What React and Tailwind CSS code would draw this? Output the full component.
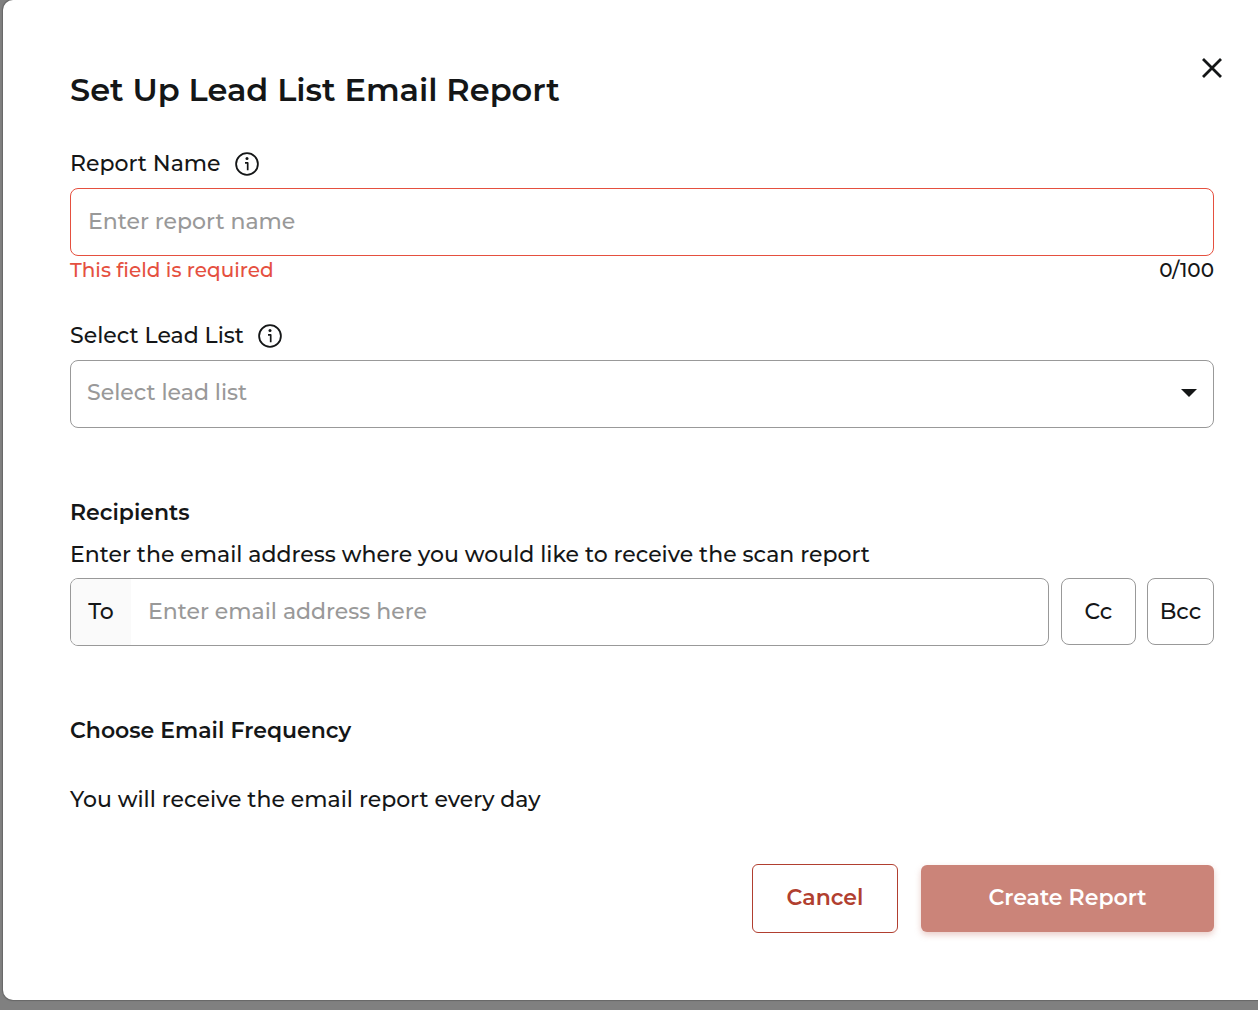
import { useState } from "react";

function InfoIcon() {
  return (
    <svg viewBox="0 0 24 24" className="size-6" fill="none" stroke="currentColor" aria-hidden="true">
      <circle cx="12" cy="12" r="10.9" strokeWidth="1.8" />
      <circle cx="12" cy="6.6" r="1.5" fill="currentColor" stroke="none" />
      <path d="M10 10.9h2.7v7.4" strokeWidth="1.7" strokeLinejoin="round" />
    </svg>
  );
}

function FieldLabel({ htmlFor, info, children }) {
  return (
    <div className="mb-2 flex items-center gap-3.5 leading-8">
      <label htmlFor={htmlFor}>{children}</label>
      <button type="button" aria-label={info}>
        <InfoIcon />
      </button>
    </div>
  );
}

export default function App() {
  const [name, setName] = useState("");
  const [list, setList] = useState("");

  return (
    <div className="min-h-screen bg-[#808080] pb-[10px] pl-[3px] font-[Montserrat,Inter,sans-serif] text-[22px] font-medium text-[#141617]">
      <main
        role="dialog"
        aria-labelledby="dialog-title"
        className="relative rounded-l-[10px] bg-white pt-[70px] pr-11 pb-[67px] pl-[67px] shadow-[0_0_1px_1px_#666666]"
      >
        <button type="button" aria-label="Close" className="absolute top-[58px] right-9 size-5">
          <svg viewBox="0 0 20 20" className="size-5" fill="none" stroke="currentColor" strokeWidth="2.8">
            <path d="M1 1l18 18M19 1L1 19" />
          </svg>
        </button>

        <h1 id="dialog-title" className="mb-[38px] text-[32px] leading-10 font-semibold">
          Set Up Lead List Email Report
        </h1>

        <form onSubmit={(e) => e.preventDefault()}>
          <FieldLabel htmlFor="report-name" info="About report name">Report Name</FieldLabel>
          <input
            id="report-name"
            type="text"
            maxLength={100}
            value={name}
            onChange={(e) => setName(e.target.value)}
            placeholder="Enter report name"
            aria-describedby="report-error"
            className="block h-[68px] w-full rounded-lg border border-[#e5503f] px-[17px] pb-0.5 outline-none placeholder:text-[#999999]"
          />
          <div className="flex justify-between text-[20px] leading-7">
            <span id="report-error" className="text-[#e5503f]">This field is required</span>
            <span>{`${name.length}/100`}</span>
          </div>

          <div className="mt-9">
            <FieldLabel htmlFor="lead-list" info="About lead lists">Select Lead List</FieldLabel>
            <div className="relative">
              <select
                id="lead-list"
                value={list}
                onChange={(e) => setList(e.target.value)}
                className="block h-[68px] w-full appearance-none rounded-lg border border-[#999999] bg-white pr-12 pb-1 pl-4 text-[#999999] outline-none"
              >
                <option value="">Select lead list</option>
              </select>
              <svg viewBox="0 0 16 8" className="pointer-events-none absolute top-[29px] right-[17px] h-2 w-4" aria-hidden="true">
                <path d="M0 0h16L8 8z" fill="currentColor" />
              </svg>
            </div>
          </div>

          <h2 className="mt-[69px] leading-8 font-semibold">Recipients</h2>
          <p className="mt-[10px] mb-[7px] leading-8">
            Enter the email address where you would like to receive the scan report
          </p>
          <div className="flex items-start">
            <div className="flex h-[68px] min-w-0 flex-1 overflow-hidden rounded-lg border border-[#999999]">
              <label htmlFor="to" className="flex w-[60px] items-center justify-center bg-[#fafafa] pb-0.5">To</label>
              <input
                id="to"
                type="email"
                placeholder="Enter email address here"
                className="min-w-0 flex-1 px-[17px] pb-0.5 outline-none placeholder:text-[#999999]"
              />
            </div>
            <button type="button" className="ml-3 h-[67px] w-[75px] rounded-lg border border-[#999999]">Cc</button>
            <button type="button" className="ml-[11px] h-[67px] w-[67px] rounded-lg border border-[#999999]">Bcc</button>
          </div>

          <h2 className="mt-[69px] leading-8 font-semibold">Choose Email Frequency</h2>
          <p className="mt-[37px] leading-8">You will receive the email report every day</p>

          <div className="mt-12 flex items-center justify-end gap-[23px] font-semibold">
            <button type="button" className="h-[69px] w-[146px] rounded-md border border-[#b13f30] pb-0.5 text-[#b13f30]">
              Cancel
            </button>
            <button type="submit" className="h-[67px] w-[293px] rounded-md bg-[#cb8479] pb-0.5 text-white shadow-[0_3px_6px_#cb847966]">
              Create Report
            </button>
          </div>
        </form>
      </main>
    </div>
  );
}
